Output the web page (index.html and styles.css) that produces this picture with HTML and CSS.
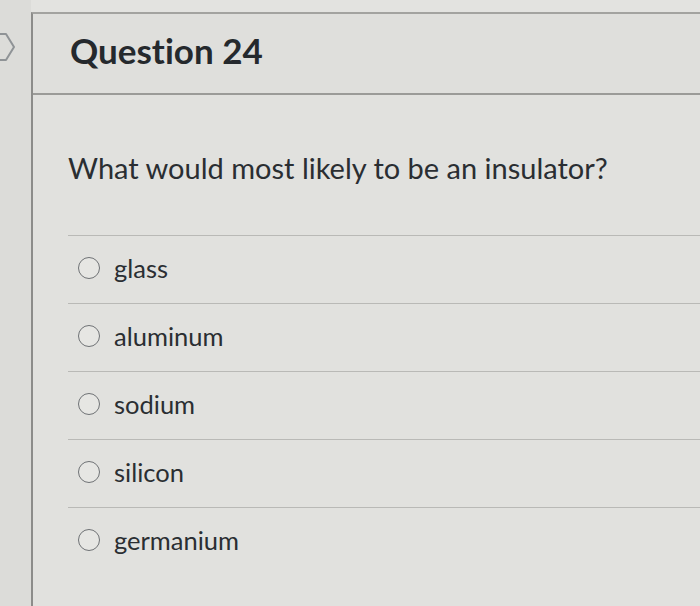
FILE: index.html
```html
<!DOCTYPE html>
<html>
<head>
<meta charset="utf-8">
<link rel="stylesheet" href="styles.css">
</head>
<body>
<div class="page">
  <div class="gutter">
    <svg class="chev" width="18" height="30" viewBox="0 0 18 30"><path d="M-2 2 L6 2 L14 15 L6 28 L-2 28" fill="none" stroke="#8f9396" stroke-width="2" stroke-linejoin="round"/></svg>
  </div>
  <div class="card">
    <div class="header"><h2 class="title">Question 24</h2></div>
    <div class="body">
      <p class="question">What would most likely to be an insulator?</p>
      <div class="answers">
        <label class="answer"><span class="radio"></span><span class="label">glass</span></label>
        <label class="answer"><span class="radio"></span><span class="label">aluminum</span></label>
        <label class="answer"><span class="radio"></span><span class="label">sodium</span></label>
        <label class="answer"><span class="radio"></span><span class="label">silicon</span></label>
        <label class="answer"><span class="radio"></span><span class="label">germanium</span></label>
      </div>
    </div>
  </div>
</div>
</body>
</html>
```

FILE: styles.css
```css
* { box-sizing: border-box; }
html, body { margin: 0; padding: 0; }
body {
  width: 700px;
  height: 606px;
  overflow: hidden;
  background: #e3e3e0;
  font-family: Lato, "Open Sans", sans-serif;
  font-variant-ligatures: none;
  color: #2b2f33;
}
.page {
  display: flex;
  padding-top: 12px;
  height: 606px;
}
.gutter {
  width: 31px;
  flex: none;
  background: #dcdcd9;
  margin-top: -12px;
  padding-top: 32px;
}
.chev { display: block; }
.card {
  flex: 1;
  border-left: 2px solid #8c8c8a;
  border-top: 2px solid #a3a3a0;
  background: #e1e1de;
  display: flex;
  flex-direction: column;
}
.header {
  height: 81px;
  border-bottom: 2px solid #9b9b98;
  background: #dfdfdc;
  padding-left: 37px;
  display: flex;
  align-items: center;
}
.title {
  margin: 0;
  font-size: 35px;
  font-weight: 700;
  color: #25292d;
  margin-top: -8px;
}
.body {
  padding-left: 35px;
  flex: 1;
}
.question {
  margin: 0;
  height: 140px;
  padding-top: 55px;
  font-size: 29px;
  line-height: 36px;
  color: #2a2e32;
}
.answers { display: flex; flex-direction: column; }
.answer {
  height: 68px;
  border-top: 1px solid #b9b9b6;
  display: flex;
  align-items: center;
  padding-left: 10px;
  padding-bottom: 4px;
  gap: 14px;
}
.radio {
  width: 22px;
  height: 22px;
  border: 1.6px solid #6f7275;
  border-radius: 50%;
  background: #e6e6e3;
  flex: none;
}
.label {
  font-size: 25.5px;
  color: #2a2e32;
}
```
